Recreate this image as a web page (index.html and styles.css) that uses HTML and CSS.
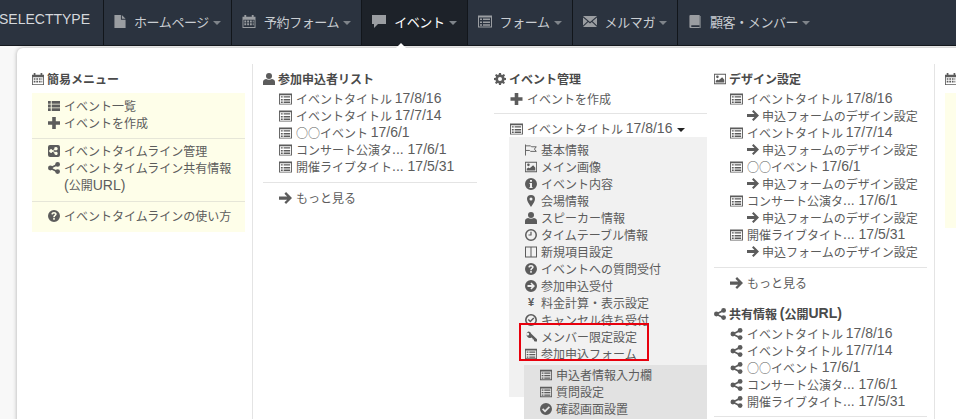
FILE: index.html
```html
<!DOCTYPE html>
<html lang="ja">
<head>
<meta charset="utf-8">
<title>SELECTTYPE</title>
<link rel="stylesheet" href="styles.css">
</head>
<body>
<svg class="defs" width="0" height="0">
<symbol id="file" viewBox="0 0 12 14"><path d="M0 0h7v5h5v9H0zM8 0l4 4H8z"/></symbol>
<symbol id="cal" viewBox="0 0 14 14"><path d="M0 2h2V0h2v2h6V0h2v2h2v12H0zM1 5v8h12V5z"/><path d="M2 6h2v2H2zM5 6h2v2H5zM8 6h2v2H8zM11 6h1v2h-1zM2 9h2v2H2zM5 9h2v2H5zM8 9h2v2H8zM11 9h1v2h-1z"/></symbol>
<symbol id="comment" viewBox="0 0 14 13"><path d="M0 0h14v9H6l-4 4V9H0z"/></symbol>
<symbol id="listalt" viewBox="0 0 14 12"><path fill-rule="evenodd" d="M0 0h14v12H0zM1 2v9h12V2z"/><path d="M2 3h2v1.500H2zM5 3h7v1.500H5zM2 6h2v1.500H2zM5 6h7v1.500H5zM2 8.800h2v1.500H2zM5 8.800h7v1.500H5z"/></symbol>
<symbol id="mail" viewBox="0 0 14 11"><path d="M0 0h14L7 6zM0 1.500l4.500 3.800L0 9.500zM14 1.500L9.500 5.300 14 9.500zM5.200 6L7 7.500 8.800 6 14 11H0z"/></symbol>
<symbol id="book" viewBox="0 0 12 14"><path d="M1 0h10v11H2v2h9v1H1q-1 0-1-1V1q0-1 1-1z"/><path d="M11 1h1v13h-1z"/></symbol>
<symbol id="thlist" viewBox="0 0 13 11"><path d="M0 0h3v3H0zM4 0h9v3H4zM0 4h3v3H0zM4 4h9v3H4zM0 8h3v3H0zM4 8h9v3H4z"/></symbol>
<symbol id="plus" viewBox="0 0 10 10"><path d="M3.500 0h3v3.500H10v3H6.500V10h-3V6.500H0v-3h3.500z"/></symbol>
<symbol id="sharesq" viewBox="0 0 12 12"><path fill-rule="evenodd" d="M2 0h8q2 0 2 2v8q0 2-2 2H2q-2 0-2-2V2q0-2 2-2zM8 2a1.700 1.700 0 0 0-1.600 2.200L4.400 5.300a1.700 1.700 0 1 0 0 1.400l2 1.100A1.700 1.700 0 1 0 7 7l-2.100-1 2-1A1.700 1.700 0 1 0 8 2z"/></symbol>
<symbol id="share" viewBox="0 0 12 12"><circle cx="2.400" cy="6" r="2.400"/><circle cx="9.600" cy="2.400" r="2.400"/><circle cx="9.600" cy="9.600" r="2.400"/><path d="M2 5.300L9 1.800l.9 1.400-7 3.500zM2.900 5.400l7 3.500-.8 1.500-7-3.500z"/></symbol>
<symbol id="question" viewBox="0 0 12 12"><path fill-rule="evenodd" d="M6 0a6 6 0 1 1 0 12A6 6 0 0 1 6 0zM6 2C4.500 2 3.500 2.800 3.300 4.200l1.600.2C5 3.700 5.400 3.400 6 3.400s1 .3 1 .8c0 .9-1.800 1.100-1.800 3h1.600c0-1.200 1.900-1.500 1.900-3.100C8.700 2.900 7.500 2 6 2zM5.200 8v1.800h1.600V8z"/></symbol>
<symbol id="user" viewBox="0 0 12 12"><circle cx="6" cy="3" r="3"/><path d="M0 12V9q0-2.500 3-3 3 1.500 6 0 3 .5 3 3v3z"/></symbol>
<symbol id="cog" viewBox="0 0 12 12"><path fill-rule="evenodd" d="M5 0h2l.3 1.700 1 .4L9.800 1l1.300 1.300L10 3.700l.4 1L12 5v2l-1.700.3-.4 1 1.100 1.500-1.300 1.300-1.500-1.100-1 .4L7 12H5l-.3-1.700-1-.4L2.300 11 1 9.700l1-1.400-.4-1L0 7V5l1.700-.3.4-1L1 2.300 2.300 1l1.400 1 1-.4zM6 4a2 2 0 1 0 0 4 2 2 0 0 0 0-4z"/></symbol>
<symbol id="pic" viewBox="0 0 14 12"><path fill-rule="evenodd" d="M0 0h14v12H0zM1 1v10h12V1z"/><circle cx="4" cy="3.500" r="1.500"/><path d="M2 10V8l2-1.500 1.500 1L9.500 4 12 7v3z"/></symbol>
<symbol id="arrow" viewBox="0 0 12 11"><path d="M6.500 0L12 5.500 6.500 11 5 9.500 7.500 7H0V4h7.500L5 1.500z"/></symbol>
<symbol id="flag" viewBox="0 0 13 12"><path d="M0 0h1v12H0z"/><path fill="none" stroke="currentColor" d="M1 1.500h5l1 1h5.200l-2 2.500 2 2.500H6l-1-1H1"/></symbol>
<symbol id="info" viewBox="0 0 12 12"><path fill-rule="evenodd" d="M6 0a6 6 0 1 1 0 12A6 6 0 0 1 6 0zM5 2v1.800h2V2zM4.500 5v1H5v3H4.500v1h3V9H7V5z"/></symbol>
<symbol id="pin" viewBox="0 0 8 12"><path fill-rule="evenodd" d="M4 0a4 4 0 0 1 4 4c0 2-2 5-4 8-2-3-4-6-4-8a4 4 0 0 1 4-4zM4 2.500a1.500 1.500 0 1 0 0 3 1.500 1.500 0 0 0 0-3z"/></symbol>
<symbol id="clock" viewBox="0 0 12 12"><path fill-rule="evenodd" d="M6 0a6 6 0 1 1 0 12A6 6 0 0 1 6 0zM6 1.500a4.500 4.500 0 1 0 0 9 4.500 4.500 0 0 0 0-9z"/><path d="M5.400 2.800h1.200v3.800H3.500V5.500h1.900z"/></symbol>
<symbol id="cols" viewBox="0 0 12 11"><path fill-rule="evenodd" d="M0 0h12v11H0zM1 1v9h4.500V1zM6.500 1v9H11V1z"/></symbol>
<symbol id="circarrow" viewBox="0 0 12 12"><path fill-rule="evenodd" d="M6 0a6 6 0 1 1 0 12A6 6 0 0 1 6 0zM6.500 2.500L5.400 3.600 6.800 5H2.500v2h4.300L5.400 8.400l1.100 1.100L10 6z"/></symbol>
<symbol id="okcirc" viewBox="0 0 12 12"><path fill-rule="evenodd" d="M6 0a6 6 0 1 1 0 12A6 6 0 0 1 6 0zM6 1.600a4.400 4.400 0 1 0 0 8.800 4.400 4.400 0 0 0 0-8.800zM8.300 3.600l1 1-4 3.900-2.500-2.400 1-1L5.300 6.500z"/></symbol>
<symbol id="check" viewBox="0 0 12 12"><path fill-rule="evenodd" d="M6 0a6 6 0 1 1 0 12A6 6 0 0 1 6 0zM8.800 3.200L5 7 3.200 5.200 2 6.400l3 3 5-5z"/></symbol>
<symbol id="key" viewBox="0 0 13 12"><path fill-rule="evenodd" d="M3.500 0a3.500 3.500 0 0 1 3.300 2.400L13 8.500V11h-2.500L9.700 10V8.800H8.300V7.500L7 6.500A3.500 3.500 0 1 1 3.500 0zM3 1.500a1.500 1.500 0 1 0 0 3 1.500 1.500 0 0 0 0-3zM5 2.800a2.500 2.500 0 0 1-2 3A2.500 2.500 0 0 0 5 2.800z"/></symbol>
</svg>

<header class="nav">
  <div class="brand">SELECTTYPE</div>
  <a class="tab"><svg class="ni ni-file"><use href="#file"/></svg>ホームページ<i class="caret"></i></a>
  <a class="tab"><svg class="ni"><use href="#cal"/></svg>予約フォーム<i class="caret"></i></a>
  <a class="tab active"><svg class="ni"><use href="#comment"/></svg>イベント<i class="caret"></i></a>
  <a class="tab"><svg class="ni"><use href="#listalt"/></svg>フォーム<i class="caret"></i></a>
  <a class="tab"><svg class="ni"><use href="#mail"/></svg>メルマガ<i class="caret"></i></a>
  <a class="tab plain"><svg class="ni"><use href="#book"/></svg>顧客・メンバー<i class="caret"></i></a>
</header>

<main class="stage">
  <i class="pointer"></i>
  <section class="panel">
    <div class="col c1">
      <h3 class="head"><svg class="ic hcal"><use href="#cal"/></svg>簡易メニュー</h3>
      <div class="note">
        <div class="group">
          <a class="row"><svg class="ic"><use href="#thlist"/></svg>イベント一覧</a>
          <a class="row"><svg class="ic"><use href="#plus"/></svg>イベントを作成</a>
        </div>
        <div class="group">
          <a class="row"><svg class="ic"><use href="#sharesq"/></svg>イベントタイムライン管理</a>
          <a class="row"><svg class="ic"><use href="#share"/></svg><span>イベントタイムライン共有情報<br><span class="lat">(</span>公開<span class="lat">URL)</span></span></a>
        </div>
        <div class="group">
          <a class="row"><svg class="ic"><use href="#question"/></svg>イベントタイムラインの使い方</a>
        </div>
      </div>
    </div>

    <div class="col c2">
      <h3 class="head"><svg class="ic"><use href="#user"/></svg>参加申込者リスト</h3>
      <div class="list">
        <a class="row"><svg class="ic"><use href="#listalt"/></svg>イベントタイトル <span class="lat">17/8/16</span></a>
        <a class="row"><svg class="ic"><use href="#listalt"/></svg>イベントタイトル <span class="lat">17/7/14</span></a>
        <a class="row"><svg class="ic"><use href="#listalt"/></svg>○○イベント <span class="lat">17/6/1</span></a>
        <a class="row"><svg class="ic"><use href="#listalt"/></svg>コンサート公演タ<span class="lat">... 17/6/1</span></a>
        <a class="row"><svg class="ic"><use href="#listalt"/></svg>開催ライブタイト<span class="lat">... 17/5/31</span></a>
      </div>
      <div class="list more">
        <a class="row"><svg class="ic"><use href="#arrow"/></svg>もっと見る</a>
      </div>
    </div>

    <div class="col c3">
      <h3 class="head"><svg class="ic"><use href="#cog"/></svg>イベント管理</h3>
      <div class="list">
        <a class="row"><svg class="ic"><use href="#plus"/></svg>イベントを作成</a>
      </div>
      <div class="list current">
        <a class="row"><svg class="ic"><use href="#listalt"/></svg>イベントタイトル <span class="lat">17/8/16</span><i class="caret dark"></i></a>
      </div>
      <div class="sub">
        <a class="row"><svg class="ic"><use href="#flag"/></svg>基本情報</a>
        <a class="row"><svg class="ic"><use href="#pic"/></svg>メイン画像</a>
        <a class="row"><svg class="ic"><use href="#info"/></svg>イベント内容</a>
        <a class="row"><svg class="ic"><use href="#pin"/></svg>会場情報</a>
        <a class="row"><svg class="ic"><use href="#user"/></svg>スピーカー情報</a>
        <a class="row"><svg class="ic"><use href="#clock"/></svg>タイムテーブル情報</a>
        <a class="row"><svg class="ic"><use href="#cols"/></svg>新規項目設定</a>
        <a class="row"><svg class="ic"><use href="#question"/></svg>イベントへの質問受付</a>
        <a class="row"><svg class="ic"><use href="#circarrow"/></svg>参加申込受付</a>
        <a class="row"><span class="yen">¥</span>料金計算・表示設定</a>
        <a class="row"><svg class="ic"><use href="#okcirc"/></svg>キャンセル待ち受付</a>
        <a class="row"><svg class="ic"><use href="#key"/></svg>メンバー限定設定</a>
        <a class="row"><svg class="ic"><use href="#listalt"/></svg>参加申込フォーム</a>
        <div class="subsub">
          <a class="row"><svg class="ic"><use href="#listalt"/></svg>申込者情報入力欄</a>
          <a class="row"><svg class="ic"><use href="#listalt"/></svg>質問設定</a>
          <a class="row"><svg class="ic"><use href="#check"/></svg>確認画面設置</a>
        </div>
      </div>
    </div>

    <div class="col c4">
      <h3 class="head"><svg class="ic"><use href="#pic"/></svg>デザイン設定</h3>
      <div class="list">
        <a class="row"><svg class="ic"><use href="#listalt"/></svg>イベントタイトル <span class="lat">17/8/16</span></a>
        <a class="row indent"><svg class="ic"><use href="#arrow"/></svg>申込フォームのデザイン設定</a>
        <a class="row"><svg class="ic"><use href="#listalt"/></svg>イベントタイトル <span class="lat">17/7/14</span></a>
        <a class="row indent"><svg class="ic"><use href="#arrow"/></svg>申込フォームのデザイン設定</a>
        <a class="row"><svg class="ic"><use href="#listalt"/></svg>○○イベント <span class="lat">17/6/1</span></a>
        <a class="row indent"><svg class="ic"><use href="#arrow"/></svg>申込フォームのデザイン設定</a>
        <a class="row"><svg class="ic"><use href="#listalt"/></svg>コンサート公演タ<span class="lat">... 17/6/1</span></a>
        <a class="row indent"><svg class="ic"><use href="#arrow"/></svg>申込フォームのデザイン設定</a>
        <a class="row"><svg class="ic"><use href="#listalt"/></svg>開催ライブタイト<span class="lat">... 17/5/31</span></a>
        <a class="row indent"><svg class="ic"><use href="#arrow"/></svg>申込フォームのデザイン設定</a>
      </div>
      <div class="list more">
        <a class="row"><svg class="ic"><use href="#arrow"/></svg>もっと見る</a>
      </div>
      <h3 class="head second"><svg class="ic"><use href="#share"/></svg>共有情報 <span class="lat">(</span>公開<span class="lat">URL)</span></h3>
      <div class="list">
        <a class="row"><svg class="ic"><use href="#share"/></svg>イベントタイトル <span class="lat">17/8/16</span></a>
        <a class="row"><svg class="ic"><use href="#share"/></svg>イベントタイトル <span class="lat">17/7/14</span></a>
        <a class="row"><svg class="ic"><use href="#share"/></svg>○○イベント <span class="lat">17/6/1</span></a>
        <a class="row"><svg class="ic"><use href="#share"/></svg>コンサート公演タ<span class="lat">... 17/6/1</span></a>
        <a class="row"><svg class="ic"><use href="#share"/></svg>開催ライブタイト<span class="lat">... 17/5/31</span></a>
      </div>
      <div class="rule"></div>
    </div>

    <div class="col c5">
      <h3 class="head"><svg class="ic"><use href="#cal"/></svg></h3>
      <div class="note"></div>
    </div>
  </section>
  <div class="mark"></div>
</main>
</body>
</html>
```
FILE: styles.css
```css
* { box-sizing: border-box; }
html, body { margin: 0; height: 419px; overflow: hidden; }
body {
  background: #f8f8f8;
  color: #5c5c5c;
  font: 12px/17px "Noto Sans CJK JP", "Liberation Sans", sans-serif;
  width: 956px;
}
.defs { position: absolute; }
.lat { font: 14px/17px "Liberation Sans", sans-serif; }

/* top bar */
.nav {
  display: flex;
  height: 46px;
  background: #2b333f;
  border-bottom: 1px solid #15191f;
  color: #c9cdd2;
  font-size: 13px;
}
.brand {
  width: 105px;
  padding-top: 10px;
  margin-left: -1px;
  font: 14px/18px "Liberation Sans", sans-serif;
  color: #d5d8dc;
  border-right: 1px solid #12161b;
}
.tab {
  display: flex;
  align-items: center;
  padding: 0 10px 2px 10px;
  border-right: 1px solid #12161b;
  letter-spacing: -0.4px;
  white-space: nowrap;
}
.tab.plain { border-right: 0; }
.tab.active { background: #1d2229; color: #fff; }
.ni { width: 14px; height: 13px; margin-right: 8px; margin-left: 0; fill: #9a9da1; }
.ni-file { width: 12px; }
.caret {
  display: inline-block;
  width: 0;
  height: 0;
  margin: 2px 0 0 4px;
  border: 4px solid transparent;
  border-top-color: #7f848a;
  border-bottom-width: 0;
}
.caret.dark { border-top-color: #222; margin-left: 5px; }

/* dropdown */
.stage { position: relative; padding: 2px 0 0 17px; }
.pointer {
  position: absolute;
  left: 395px;
  top: -3px;
  border: 6px solid transparent;
  border-top-width: 0;
  border-bottom-color: #fff;
}
.panel {
  display: flex;
  height: 400px;
  width: 960px;
  padding-top: 16px;
  background: #fff;
  border-radius: 6px 0 0 0;
  box-shadow: 0 0 4px rgba(0, 0, 0, .3);
  overflow: hidden;
}
.col { flex: none; padding-top: 6px; }
.c1 { width: 236px; padding-left: 15px; padding-right: 7px; border-right: 1px solid #e4e4e4; }
.c2 { width: 231px; padding-left: 10px; padding-right: 7px; }
.c3 { width: 230px; padding-left: 10px; padding-right: 7px; }
.c4 { width: 221px; padding-left: 0; padding-right: 7px; border-right: 1px solid #e4e4e4; }
.c5 { width: 40px; padding-left: 10px; }

.head {
  display: flex;
  align-items: center;
  margin: 0;
  height: 17px;
  font-size: 12px;
  font-weight: 700;
  color: #4a4a4a;
  white-space: pre;
}
.head .lat { font-weight: 700; }
.head .ic { margin: 0 3px 0 0; }
.hcal { fill: #a08662; }
.head.second { margin-top: 14px; }

.row { display: flex; align-items: center; height: 17px; white-space: pre; }
.ic { flex: none; width: 12px; height: 12px; margin-right: 4px; fill: #5c5c5c; color: #5c5c5c; }
.list { padding: 3px 0 0 16px; }
.list .row .ic { width: 13px; height: 12px; }
.indent { padding-left: 17px; }
.list .indent .ic { width: 12px; height: 11px; margin-right: 3px; }

.more { margin-top: 7px; padding-top: 6px; border-top: 1px solid #e4e4e4; }
.current { margin-top: 6px; padding-top: 6px; border-top: 1px solid #e4e4e4; }
.rule { margin-top: 6px; border-top: 1px solid #e4e4e4; }

/* yellow box */
.note { margin-top: 6px; background: #fefee9; }
.c5 .note { height: 135px; }
.group { padding: 3px 0 7px 16px; border-bottom: 1px solid #e6e6d8; }
.group:first-child { padding-top: 4px; }
.group:last-child { border-bottom: 0; padding-bottom: 8px; padding-top: 5px; }
.group .row { align-items: flex-start; height: auto; min-height: 17px; }
.group .ic { margin-top: 3px; margin-right: 4px; }

/* current event */
.sub { margin-left: 15px; padding: 4px 0 0 16px; background: #f1f1f1; height: 260px; }
.subsub { margin: 3px 0 0 -1px; padding: 1px 0 0 16px; height: 60px; background: #e2e2e2; }
.yen { width: 12px; margin-right: 4px; font: 700 11px/17px "Liberation Sans", sans-serif; text-align: center; }

/* annotation */
.mark {
  position: absolute;
  left: 519px;
  top: 277px;
  width: 130px;
  height: 38px;
  border: 2px solid #e8000d;
}
```
